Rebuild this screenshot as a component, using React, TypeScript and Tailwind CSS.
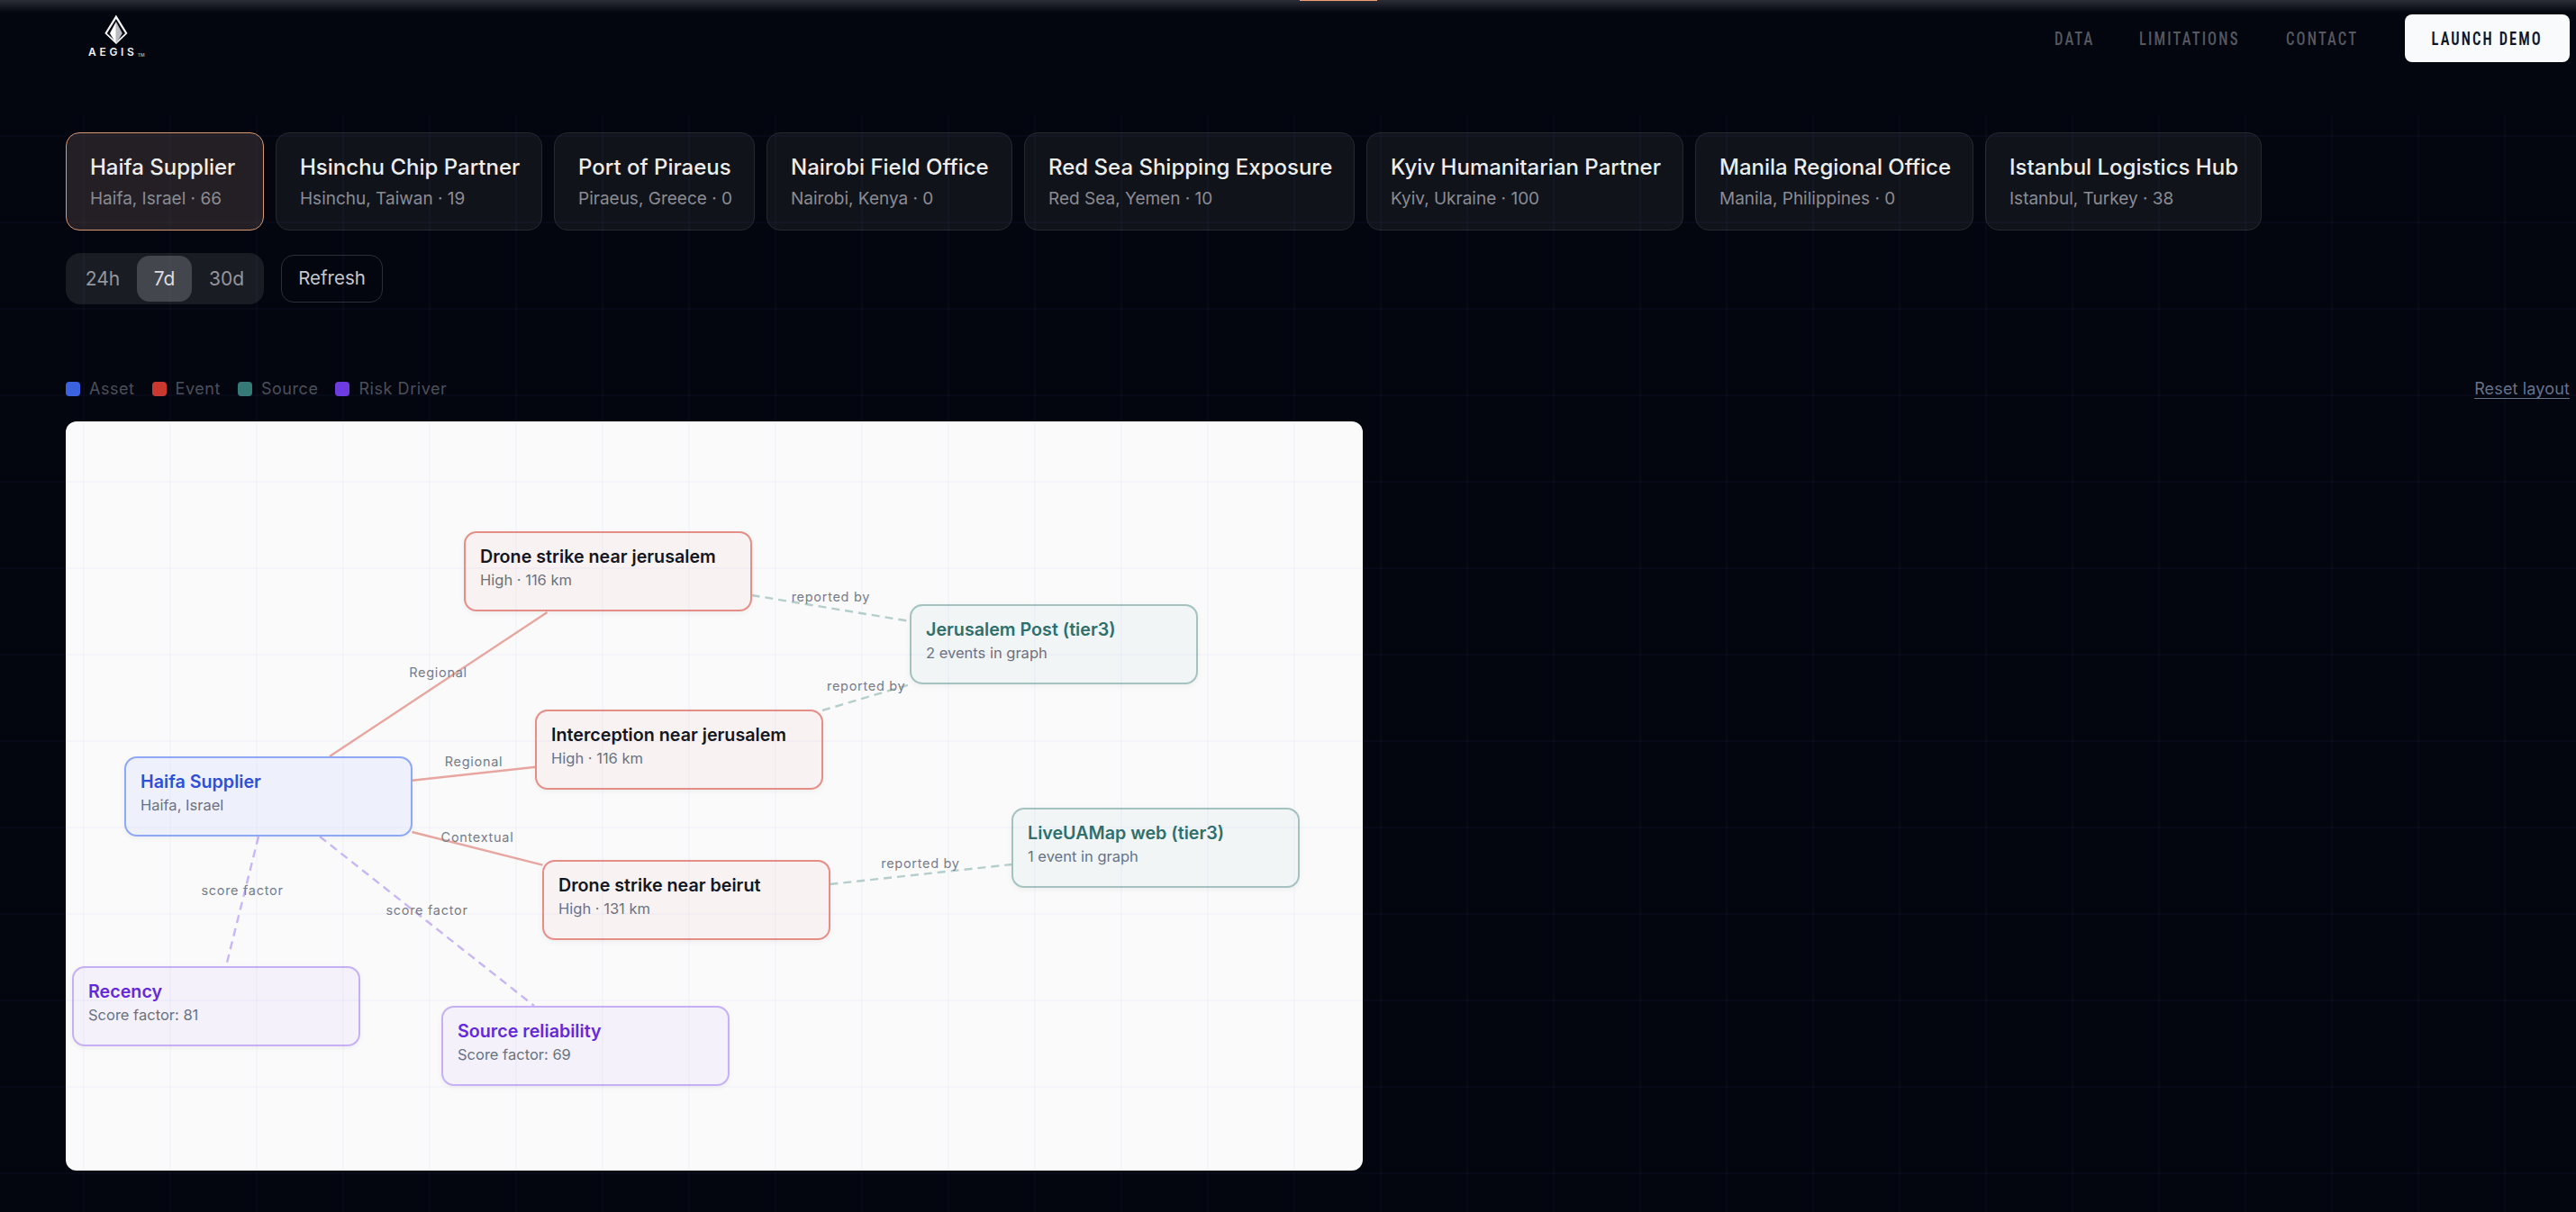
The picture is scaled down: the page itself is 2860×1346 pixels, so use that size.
import React from "react";

const places = [
  { name: "Haifa Supplier", sub: "Haifa, Israel · 66", active: true, w: "w-[220px]" },
  { name: "Hsinchu Chip Partner", sub: "Hsinchu, Taiwan · 19", w: "w-[296px]" },
  { name: "Port of Piraeus", sub: "Piraeus, Greece · 0", w: "w-[223px]" },
  { name: "Nairobi Field Office", sub: "Nairobi, Kenya · 0", w: "w-[273px]" },
  { name: "Red Sea Shipping Exposure", sub: "Red Sea, Yemen · 10", w: "w-[367px]" },
  { name: "Kyiv Humanitarian Partner", sub: "Kyiv, Ukraine · 100", w: "w-[352px]" },
  { name: "Manila Regional Office", sub: "Manila, Philippines · 0", w: "w-[309px]" },
  { name: "Istanbul Logistics Hub", sub: "Istanbul, Turkey · 38", w: "w-[307px]" },
];

const legend = [
  { label: "Asset", cls: "bg-[#3b63e0]" },
  { label: "Event", cls: "bg-[#c9392f]" },
  { label: "Source", cls: "bg-[#357a76]" },
  { label: "Risk Driver", cls: "bg-[#6d3be0]" },
];

const tones = {
  asset: { box: "border-[#8fa8f5] bg-[#eef1fb]", title: "text-[#2f4fd6]" },
  event: { box: "border-[#e58e88] bg-[#f8f2f2]", title: "text-[#14161f]" },
  source: { box: "border-[#a3c2c0] bg-[#f1f5f6]", title: "text-[#2f6f6c]" },
  risk: { box: "border-[#c6b0f3] bg-[#f4f1fa]", title: "text-[#6429d8]" },
};

const nodes = [
  { title: "Drone strike near jerusalem", sub: "High · 116 km", tone: tones.event, pos: "left-[442px] top-[122px]" },
  { title: "Interception near jerusalem", sub: "High · 116 km", tone: tones.event, pos: "left-[521px] top-[320px]" },
  { title: "Drone strike near beirut", sub: "High · 131 km", tone: tones.event, pos: "left-[529px] top-[487px]" },
  { title: "Haifa Supplier", sub: "Haifa, Israel", tone: tones.asset, pos: "left-[65px] top-[372px]" },
  { title: "Jerusalem Post (tier3)", sub: "2 events in graph", tone: tones.source, pos: "left-[937px] top-[203px]" },
  { title: "LiveUAMap web (tier3)", sub: "1 event in graph", tone: tones.source, pos: "left-[1050px] top-[429px]" },
  { title: "Recency", sub: "Score factor: 81", tone: tones.risk, pos: "left-[7px] top-[605px]" },
  { title: "Source reliability", sub: "Score factor: 69", tone: tones.risk, pos: "left-[417px] top-[649px]" },
];

const RED = "#e8a6a0";
const TEAL = "#b4cecb";
const PURPLE = "#c9b6f5";

const edges = [
  { x1: 366, y1: 840, x2: 607.5, y2: 680, color: RED, label: "Regional", lx: 486.5, ly: 747 },
  { x1: 457.5, y1: 866.7, x2: 595, y2: 851.7, color: RED, label: "Regional", lx: 526, ly: 846 },
  { x1: 457.5, y1: 924, x2: 602.4, y2: 960.7, color: RED, label: "Contextual", lx: 530, ly: 930 },
  { x1: 287, y1: 929, x2: 251, y2: 1073, color: PURPLE, dashed: true, label: "score factor", lx: 269, ly: 989 },
  { x1: 355, y1: 929, x2: 593, y2: 1117, color: PURPLE, dashed: true, label: "score factor", lx: 474, ly: 1011 },
  { x1: 834.5, y1: 661, x2: 1010.7, y2: 690, color: TEAL, dashed: true, label: "reported by", lx: 922.4, ly: 663 },
  { x1: 913, y1: 789, x2: 1010.7, y2: 760, color: TEAL, dashed: true, label: "reported by", lx: 961.7, ly: 762 },
  { x1: 921.4, y1: 982, x2: 1123.5, y2: 960, color: TEAL, dashed: true, label: "reported by", lx: 1022, ly: 959 },
];

function Logo() {
  return (
    <div className="flex w-[70px] flex-col items-start">
      <svg width="30" height="34" viewBox="114 16 30 34" className="ml-[16px]">
        <path d="M128.9 16.5 L141.5 37 L129 49 L116.3 37 Z M128.9 21 L118.8 37 L129 46.5 L139 37 Z" fill="#f4f4f5" fillRule="evenodd" />
        <path d="M128.9 24 L122 37 L128.9 48.5 Z" fill="#ffffff" />
        <path d="M128.9 24 L135.8 37 L128.9 48.5 Z" fill="#b9bbc0" />
      </svg>
      <div className="mt-[2px] flex items-end text-[12px] leading-[12px] font-semibold tracking-[3.7px] text-[#f2f2f3]">
        AEGIS<span className="text-[5px] leading-[6px] tracking-normal text-[#a5a7ac]">TM</span>
      </div>
    </div>
  );
}

export default function App() {
  return (
    <div className="relative h-[1346px] w-full overflow-hidden bg-[#03050f] font-['Inter',sans-serif]">
      <div className="pointer-events-none absolute inset-x-0 top-0 h-[14px] bg-gradient-to-b from-[#2b2e37] to-transparent" />
      <div className="absolute left-[1443px] top-0 h-px w-[86px] bg-[#f0a070]" />

      <header className="relative flex h-[147px] items-start justify-between pl-[98px] pr-[7px] pt-[16px]">
        <Logo />
        <nav className="flex items-center font-['Roboto',sans-serif] text-[20px] font-medium tracking-[2.6px] whitespace-nowrap text-[#55585f] [font-stretch:75%]">
          <span className="inline-block w-[41px] origin-left scale-x-[0.83]">DATA</span>
          <span className="ml-[53px] inline-block w-[110px] origin-left scale-x-[0.83]">LIMITATIONS</span>
          <span className="ml-[53px] inline-block w-[78px] origin-left scale-x-[0.83]">CONTACT</span>
          <button className="ml-[54px] flex h-[53px] w-[183px] items-center justify-center rounded-[8px] bg-[#f8fafc] text-[#10162a]">
            <span className="inline-block scale-x-[0.82] font-semibold tracking-[2.6px] [font-stretch:75%]">LAUNCH DEMO</span>
          </button>
        </nav>
      </header>

      <main className="relative pl-[73px] pr-[7px]">
        <div className="flex gap-[13px]">
          {places.map((p) => (
            <div
              key={p.name}
              className={
                "flex h-[109px] flex-col justify-center rounded-[15px] border px-[26px] " +
                p.w +
                " " +
                (p.active ? "border-[#d89a72] bg-[#231f24]" : "border-[#262932] bg-[#11131b]")
              }
            >
              <div className="text-[24px] leading-[34px] font-medium whitespace-nowrap text-[#eceded]">{p.name}</div>
              <div className="mt-[4px] text-[19px] leading-[28px] whitespace-nowrap text-[#8a8c94]">{p.sub}</div>
            </div>
          ))}
        </div>

        <div className="mt-[25px] flex items-center gap-[19px]">
          <div className="flex h-[57px] w-[220px] items-center rounded-[16px] bg-[#1a1c24] p-[3px] text-[21px]">
            <button className="h-[51px] w-[76px] text-[#94969d]">24h</button>
            <button className="h-[51px] w-[61px] rounded-[14px] bg-[#44464d] text-[#dcdde0]">7d</button>
            <button className="h-[51px] w-[77px] text-[#94969d]">30d</button>
          </div>
          <button className="h-[53px] w-[113px] rounded-[14px] border border-[#2c2f38] text-[20.5px] text-[#c5c7cc]">Refresh</button>
        </div>

        <div className="mt-[86px] flex items-center justify-between">
          <div className="flex items-center gap-[19px]">
            {legend.map((l) => (
              <div key={l.label} className="flex items-center gap-[10px]">
                <span className={"h-[16px] w-[16px] rounded-[4px] " + l.cls} />
                <span className="text-[18px] leading-[16px] tracking-[0.55px] text-[#4c505a]">{l.label}</span>
              </div>
            ))}
          </div>
          <span className="text-[18px] leading-[16px] tracking-[0.15px] text-[#66728a] underline underline-offset-[4px]">Reset layout</span>
        </div>

        <div className="relative mt-[28px] h-[832px] w-[1440px] overflow-hidden rounded-[12px] bg-[#fafafa]">
          <svg className="absolute inset-0 h-full w-full" viewBox="73 468 1440 832">
            {edges.map((e, i) => (
              <line
                key={i}
                x1={e.x1}
                y1={e.y1}
                x2={e.x2}
                y2={e.y2}
                stroke={e.color}
                strokeWidth={2.4}
                strokeDasharray={e.dashed ? "9 6" : undefined}
              />
            ))}
            {edges.map((e, i) => (
              <text key={i} x={e.lx} y={e.ly + 5} textAnchor="middle" fontSize={14.5} letterSpacing={0.7} fill="#767c89">
                {e.label}
              </text>
            ))}
          </svg>
          {nodes.map((n) => (
            <div
              key={n.title}
              className={
                "absolute h-[89px] w-[320px] rounded-[14px] border-[2.5px] px-[16px] pt-[12.5px] shadow-[0_2px_6px_rgba(0,0,0,0.05)] " +
                n.pos +
                " " +
                n.tone.box
              }
            >
              <div className={"text-[19.7px] leading-[27px] font-semibold whitespace-nowrap " + n.tone.title}>{n.title}</div>
              <div className="text-[16.5px] leading-[24px] whitespace-nowrap text-[#6b7280]">{n.sub}</div>
            </div>
          ))}
        </div>
      </main>

      <div className="pointer-events-none absolute inset-x-0 bottom-0 top-[128px] bg-[linear-gradient(to_right,rgba(100,116,255,0.035)_2px,transparent_2px),linear-gradient(to_bottom,rgba(100,116,255,0.035)_2px,transparent_2px)] bg-[size:96px_96px] bg-[position:92px_22px]" />
    </div>
  );
}
